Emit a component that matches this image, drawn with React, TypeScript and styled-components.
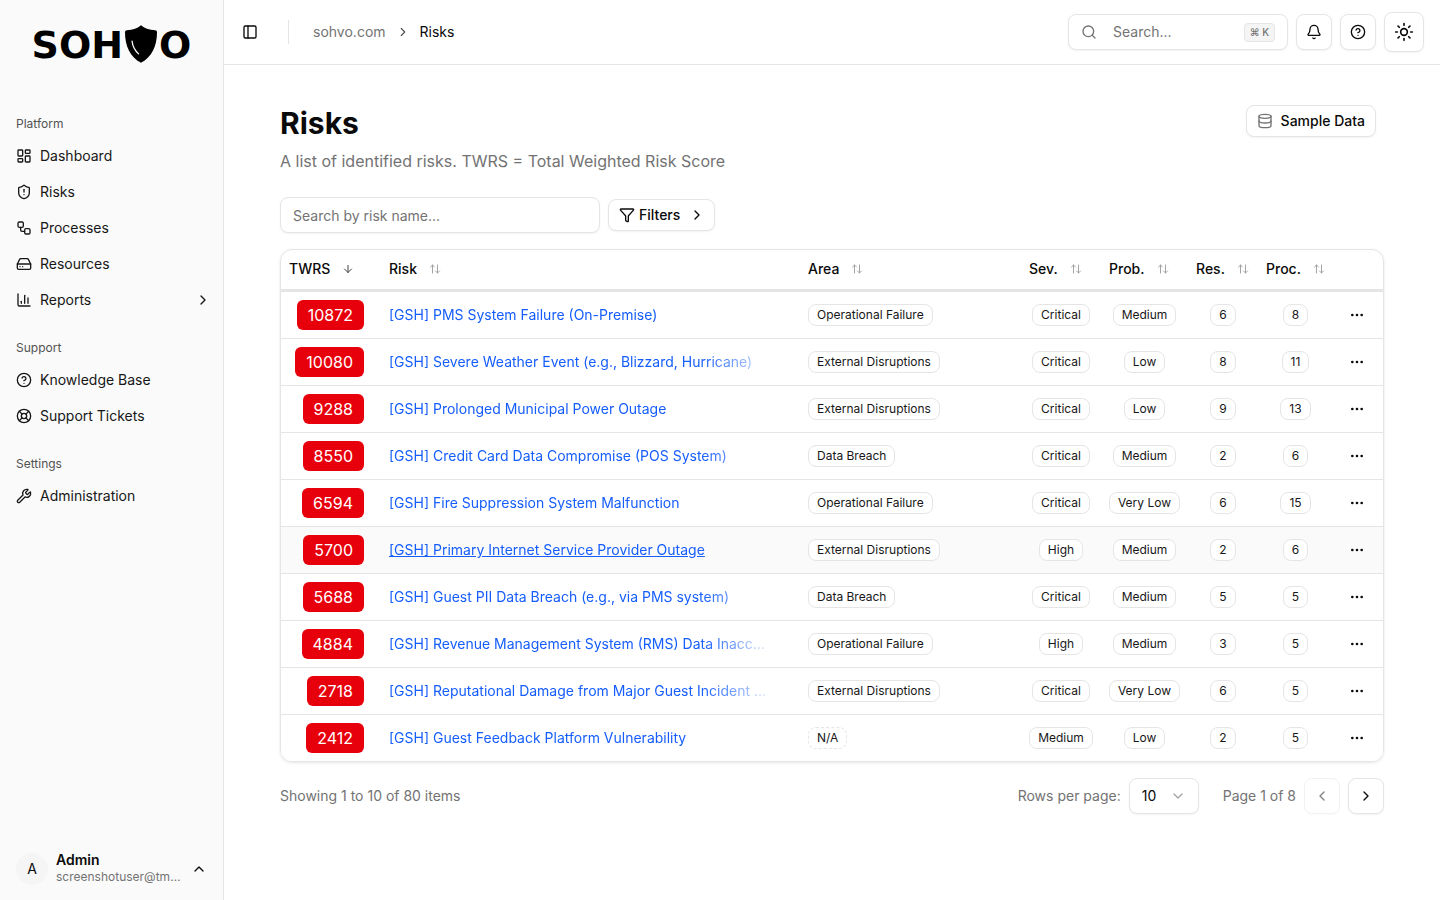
import React from "react";
import styled, { createGlobalStyle } from "styled-components";
import {
  ArrowDown,
  ArrowUpDown,
  Bell,
  ChartColumn,
  ChevronDown,
  ChevronLeft,
  ChevronRight,
  ChevronUp,
  CircleHelp,
  Database,
  Ellipsis,
  Funnel,
  HardDrive,
  LayoutDashboard,
  LifeBuoy,
  PanelLeft,
  Search,
  ShieldAlert,
  Sun,
  Workflow,
  Wrench,
} from "lucide-react";

const GlobalStyle = createGlobalStyle`
  * { box-sizing: border-box; }
  html, body { margin: 0; padding: 0; height: 100%; }
  body {
    font-family: Inter, "Liberation Sans", sans-serif;
    color: #0a0a0a;
    background: #fff;
    font-size: 14px;
    line-height: 20px;
  }
`;

const rows = [
  { twrs: 10872, risk: "[GSH] PMS System Failure (On-Premise)", area: "Operational Failure", sev: "Critical", prob: "Medium", res: 6, proc: 8 },
  { twrs: 10080, risk: "[GSH] Severe Weather Event (e.g., Blizzard, Hurricane)", area: "External Disruptions", sev: "Critical", prob: "Low", res: 8, proc: 11 },
  { twrs: 9288, risk: "[GSH] Prolonged Municipal Power Outage", area: "External Disruptions", sev: "Critical", prob: "Low", res: 9, proc: 13 },
  { twrs: 8550, risk: "[GSH] Credit Card Data Compromise (POS System)", area: "Data Breach", sev: "Critical", prob: "Medium", res: 2, proc: 6 },
  { twrs: 6594, risk: "[GSH] Fire Suppression System Malfunction", area: "Operational Failure", sev: "Critical", prob: "Very Low", res: 6, proc: 15 },
  { twrs: 5700, risk: "[GSH] Primary Internet Service Provider Outage", area: "External Disruptions", sev: "High", prob: "Medium", res: 2, proc: 6, hovered: true },
  { twrs: 5688, risk: "[GSH] Guest PII Data Breach (e.g., via PMS system)", area: "Data Breach", sev: "Critical", prob: "Medium", res: 5, proc: 5 },
  { twrs: 4884, risk: "[GSH] Revenue Management System (RMS) Data Inaccuracy", area: "Operational Failure", sev: "High", prob: "Medium", res: 3, proc: 5 },
  { twrs: 2718, risk: "[GSH] Reputational Damage from Major Guest Incident on Social", area: "External Disruptions", sev: "Critical", prob: "Very Low", res: 6, proc: 5 },
  { twrs: 2412, risk: "[GSH] Guest Feedback Platform Vulnerability", area: "N/A", sev: "Medium", prob: "Low", res: 2, proc: 5 },
];

const columns = [
  { label: "TWRS", width: 100, sorted: true },
  { label: "Risk", width: 419 },
  { label: "Area", width: 221 },
  { label: "Sev.", width: 80 },
  { label: "Prob.", width: 87 },
  { label: "Res.", width: 70 },
  { label: "Proc.", width: 75 },
];

const navGroups = [
  {
    title: "Platform",
    items: [
      { label: "Dashboard", icon: LayoutDashboard },
      { label: "Risks", icon: ShieldAlert },
      { label: "Processes", icon: Workflow },
      { label: "Resources", icon: HardDrive },
      { label: "Reports", icon: ChartColumn, more: true },
    ],
  },
  {
    title: "Support",
    items: [
      { label: "Knowledge Base", icon: CircleHelp },
      { label: "Support Tickets", icon: LifeBuoy },
    ],
  },
  {
    title: "Settings",
    items: [{ label: "Administration", icon: Wrench }],
  },
];

const ShieldMark = () => (
  <ShieldSvg viewBox="0 0 34 40" aria-hidden="true">
    <path
      fill="#000"
      d="M17 0c3.4 3 8.6 5 15 5.4 1.2 0 2 .9 2 2C34 22 28.500 33.500 17 40 5.500 33.500 0 22 0 7.400c0-1.100.8-2 2-2C8.400 5 13.600 3 17 0z"
    />
    <path fill="none" stroke="#fff" strokeWidth="1.300" strokeLinecap="round" d="M7.500 17c.6 5.500 3 10 7 13.500" />
  </ShieldSvg>
);

export default function App() {
  return (
    <>
      <GlobalStyle />
      <Shell>
        <Sidebar>
          <Logo>
            SOH
            <ShieldMark />O
          </Logo>
          <NavArea>
            {navGroups.map((group) => (
              <NavGroup key={group.title}>
                <GroupLabel>{group.title}</GroupLabel>
                {group.items.map((item) => (
                  <NavItem key={item.label}>
                    <item.icon size={16} strokeWidth={2} />
                    <span>{item.label}</span>
                    {"more" in item && (
                      <NavChevron>
                        <ChevronRight size={16} />
                      </NavChevron>
                    )}
                  </NavItem>
                ))}
              </NavGroup>
            ))}
          </NavArea>
          <UserRow>
            <Avatar>A</Avatar>
            <UserText>
              <UserName>Admin</UserName>
              <UserMail>screenshotuser@tmail.com</UserMail>
            </UserText>
            <ChevronUp size={16} />
          </UserRow>
        </Sidebar>

        <Main>
          <TopBar>
            <PanelButton>
              <PanelLeft size={16} />
            </PanelButton>
            <TopDivider />
            <Crumbs>
              <CrumbLink>sohvo.com</CrumbLink>
              <ChevronRight size={14} color="#525252" />
              <CrumbHere>Risks</CrumbHere>
            </Crumbs>
            <TopActions>
              <GlobalSearch>
                <Search size={16} color="#737373" />
                <GlobalPlaceholder>Search...</GlobalPlaceholder>
                <Kbd>⌘ K</Kbd>
              </GlobalSearch>
              <IconButton>
                <Bell size={16} />
              </IconButton>
              <IconButton>
                <CircleHelp size={16} />
              </IconButton>
              <ThemeButton>
                <Sun size={20} />
              </ThemeButton>
            </TopActions>
          </TopBar>

          <Content>
            <TitleRow>
              <div>
                <Title>Risks</Title>
                <Subtitle>A list of identified risks. TWRS = Total Weighted Risk Score</Subtitle>
              </div>
              <SampleButton>
                <Database size={16} color="#737373" />
                Sample Data
              </SampleButton>
            </TitleRow>

            <FilterRow>
              <RiskSearch placeholder="Search by risk name..." />
              <FilterButton>
                <Funnel size={16} />
                Filters
                <FilterChevron>
                  <ChevronRight size={16} />
                </FilterChevron>
              </FilterButton>
            </FilterRow>

            <TableCard>
              <Table>
                <colgroup>
                  {columns.map((c) => (
                    <Col key={c.label} $width={c.width} />
                  ))}
                  <Col $width={50} />
                </colgroup>
                <thead>
                  <tr>
                    {columns.map((c) => (
                      <HeadCell key={c.label}>
                        <HeadInner>
                          {c.label}
                          {c.sorted ? (
                            <SortIcon>
                              <ArrowDown size={12} color="#404040" />
                            </SortIcon>
                          ) : (
                            <SortIcon>
                              <ArrowUpDown size={12} color="#a3a3a3" />
                            </SortIcon>
                          )}
                        </HeadInner>
                      </HeadCell>
                    ))}
                    <HeadCell />
                  </tr>
                </thead>
                <tbody>
                  {rows.map((r) => (
                    <Row key={r.twrs} $hovered={r.hovered}>
                      <ScoreCell>
                        <Score>{r.twrs}</Score>
                      </ScoreCell>
                      <Cell>
                        <RiskLink $hovered={r.hovered}>{r.risk}</RiskLink>
                      </Cell>
                      <Cell>
                        <Chip $dashed={r.area === "N/A"}>{r.area}</Chip>
                      </Cell>
                      <CenterCell>
                        <Chip>{r.sev}</Chip>
                      </CenterCell>
                      <CenterCell>
                        <Chip>{r.prob}</Chip>
                      </CenterCell>
                      <CenterCell>
                        <Chip>{r.res}</Chip>
                      </CenterCell>
                      <CenterCell>
                        <Chip>{r.proc}</Chip>
                      </CenterCell>
                      <CenterCell>
                        <RowMenu>
                          <Ellipsis size={16} />
                        </RowMenu>
                      </CenterCell>
                    </Row>
                  ))}
                </tbody>
              </Table>
            </TableCard>

            <Pager>
              <PagerText>Showing 1 to 10 of 80 items</PagerText>
              <PagerControls>
                <PagerText>Rows per page:</PagerText>
                <RowsSelect>
                  10
                  <ChevronDown size={16} color="#a3a3a3" />
                </RowsSelect>
                <PageCount>Page 1 of 8</PageCount>
                <PageButton $disabled>
                  <ChevronLeft size={16} />
                </PageButton>
                <PageButton>
                  <ChevronRight size={16} />
                </PageButton>
              </PagerControls>
            </Pager>
          </Content>
        </Main>
      </Shell>
    </>
  );
}

const Shell = styled.div`
  display: flex;
  height: 100vh;
  overflow: hidden;
`;

const Sidebar = styled.aside`
  display: flex;
  flex-direction: column;
  flex: 0 0 224px;
  min-width: 0;
  background: #fafafa;
  border-right: 1px solid #e5e5e5;
`;

const Logo = styled.div`
  display: flex;
  align-items: center;
  justify-content: center;
  height: 90px;
  font-family: "DejaVu Sans", sans-serif;
  font-size: 38px;
  line-height: 44px;
  font-weight: 700;
  color: #000;
`;

const ShieldSvg = styled.svg`
  width: 32px;
  height: 38px;
  margin: -3px 2px 0 2px;
`;

const NavArea = styled.nav`
  display: flex;
  flex-direction: column;
  gap: 8px;
  padding: 8px 8px 0;
  margin-top: 12px;
`;

const NavGroup = styled.div`
  display: flex;
  flex-direction: column;
  padding-bottom: 8px;
`;

const GroupLabel = styled.div`
  display: flex;
  align-items: center;
  height: 28px;
  padding-left: 8px;
  font-size: 12px;
  line-height: 16px;
  font-weight: 400;
  color: #525252;
`;

const NavItem = styled.a`
  display: flex;
  align-items: center;
  gap: 8px;
  height: 36px;
  padding: 0 4px 0 8px;
  color: #171717;
  font-size: 14px;
  svg {
    flex: none;
  }
`;

const NavChevron = styled.span`
  display: flex;
  margin-left: auto;
`;

const UserRow = styled.div`
  display: flex;
  align-items: center;
  gap: 8px;
  margin-top: auto;
  padding: 0 16px 15px;
  svg {
    flex: none;
  }
`;

const Avatar = styled.div`
  display: flex;
  align-items: center;
  justify-content: center;
  flex: none;
  width: 32px;
  height: 32px;
  border-radius: 50%;
  background: #f5f5f5;
  font-size: 14px;
`;

const UserText = styled.div`
  flex: 1;
  min-width: 0;
`;

const UserName = styled.div`
  font-size: 14px;
  line-height: 14px;
  font-weight: 600;
`;

const UserMail = styled.div`
  margin-top: 2px;
  overflow: hidden;
  font-size: 12px;
  line-height: 16px;
  color: #737373;
  white-space: nowrap;
  text-overflow: ellipsis;
`;

const Main = styled.main`
  display: flex;
  flex: 1;
  flex-direction: column;
  min-width: 0;
`;

const TopBar = styled.header`
  display: flex;
  align-items: center;
  flex: 0 0 65px;
  padding: 0 16px;
  border-bottom: 1px solid #e5e5e5;
`;

const PanelButton = styled.button`
  display: flex;
  align-items: center;
  justify-content: center;
  width: 20px;
  height: 28px;
  padding: 0;
  border: 0;
  background: none;
  color: #0a0a0a;
`;

const TopDivider = styled.div`
  width: 1px;
  height: 24px;
  margin: 0 24px 0 28px;
  background: #e5e5e5;
`;

const Crumbs = styled.div`
  display: flex;
  align-items: center;
  gap: 10px;
  font-size: 14px;
`;

const CrumbLink = styled.span`
  color: #737373;
`;

const CrumbHere = styled.span`
  color: #0a0a0a;
`;

const TopActions = styled.div`
  display: flex;
  align-items: center;
  gap: 8px;
  margin-left: auto;
`;

const GlobalSearch = styled.div`
  display: flex;
  align-items: center;
  width: 220px;
  height: 36px;
  padding: 0 12px;
  border: 1px solid #e5e5e5;
  border-radius: 8px;
  background: #fff;
  box-shadow: 0 1px 2px rgba(0, 0, 0, 0.05);
`;

const GlobalPlaceholder = styled.span`
  margin-left: 16px;
  color: #737373;
  font-size: 14px;
`;

const Kbd = styled.kbd`
  display: flex;
  align-items: center;
  justify-content: center;
  width: 31px;
  height: 19px;
  margin-left: auto;
  border: 1px solid #e5e5e5;
  border-radius: 4px;
  background: #f5f5f5;
  color: #737373;
  font-family: Inter, sans-serif;
  font-size: 10px;
  font-weight: 500;
`;

const IconButton = styled.button`
  display: flex;
  align-items: center;
  justify-content: center;
  width: 36px;
  height: 36px;
  padding: 0;
  border: 1px solid #e5e5e5;
  border-radius: 8px;
  background: #fff;
  color: #0a0a0a;
  box-shadow: 0 1px 2px rgba(0, 0, 0, 0.05);
`;

const ThemeButton = styled(IconButton)`
  width: 40px;
  height: 40px;
`;

const Content = styled.div`
  padding: 40px 56px 0;
`;

const TitleRow = styled.div`
  display: flex;
  align-items: flex-start;
  justify-content: space-between;
  padding-right: 8px;
`;

const Title = styled.h1`
  margin: 0;
  font-size: 30px;
  line-height: 36px;
  font-weight: 700;
`;

const Subtitle = styled.p`
  margin: 8px 0 0;
  font-size: 16px;
  line-height: 24px;
  color: #737373;
`;

const SampleButton = styled.button`
  display: flex;
  align-items: center;
  gap: 8px;
  height: 32px;
  padding: 0 10px;
  border: 1px solid #e5e5e5;
  border-radius: 8px;
  background: #fff;
  color: #0a0a0a;
  font-family: inherit;
  font-size: 14px;
  line-height: 20px;
  font-weight: 500;
  box-shadow: 0 1px 2px rgba(0, 0, 0, 0.05);
`;

const FilterRow = styled.div`
  display: flex;
  align-items: center;
  gap: 8px;
  margin-top: 24px;
`;

const RiskSearch = styled.input`
  width: 320px;
  height: 36px;
  padding: 0 12px;
  border: 1px solid #e5e5e5;
  border-radius: 8px;
  background: #fff;
  font-family: inherit;
  font-size: 14px;
  box-shadow: 0 1px 2px rgba(0, 0, 0, 0.05);
  &::placeholder {
    color: #737373;
  }
`;

const FilterButton = styled.button`
  display: flex;
  align-items: center;
  gap: 4px;
  height: 32px;
  padding: 0 9px 0 10px;
  border: 1px solid #e5e5e5;
  border-radius: 8px;
  background: #fff;
  color: #0a0a0a;
  font-family: inherit;
  font-size: 14px;
  line-height: 20px;
  font-weight: 500;
  box-shadow: 0 1px 2px rgba(0, 0, 0, 0.05);
`;

const FilterChevron = styled.span`
  display: flex;
  margin-left: 5px;
`;

const TableCard = styled.div`
  margin-top: 16px;
  overflow: hidden;
  border: 1px solid #e5e5e5;
  border-radius: 12px;
  box-shadow: 0 1px 3px rgba(0, 0, 0, 0.1);
`;

const Table = styled.table`
  width: 100%;
  table-layout: fixed;
  border-collapse: separate;
  border-spacing: 0;
`;

const Col = styled.col<{ $width: number }>`
  width: ${(p) => p.$width}px;
`;

const HeadCell = styled.th`
  height: 42px;
  padding: 0 8px 1px;
  border-bottom: 3px solid #e5e5e5;
  font-size: 14px;
  font-weight: 500;
  text-align: left;
`;

const HeadInner = styled.span`
  display: flex;
  align-items: center;
  gap: 12px;
`;

const SortIcon = styled.span`
  display: flex;
`;

const Row = styled.tr<{ $hovered?: boolean }>`
  background: ${(p) => (p.$hovered ? "#fafafa" : "#fff")};
  &:last-child td {
    height: 46px;
    border-bottom: 0;
  }
`;

const Cell = styled.td`
  height: 47px;
  padding: 0 8px;
  border-bottom: 1px solid #e5e5e5;
  font-size: 14px;
  vertical-align: middle;
`;

const ScoreCell = styled(Cell)`
  padding-right: 17px;
  text-align: right;
`;

const CenterCell = styled(Cell)`
  padding: 0;
  text-align: center;
`;

const Score = styled.span`
  display: inline-flex;
  align-items: center;
  height: 30px;
  padding: 0 11px;
  border-radius: 6px;
  background: #e7000b;
  color: #fff;
  font-size: 16px;
  vertical-align: middle;
`;

const RiskLink = styled.a<{ $hovered?: boolean }>`
  display: block;
  width: 380px;
  overflow: hidden;
  color: #155dfc;
  font-size: 14px;
  white-space: nowrap;
  text-overflow: ellipsis;
  text-decoration: ${(p) => (p.$hovered ? "underline" : "none")};
  mask-image: linear-gradient(to right, #000 82%, rgba(0, 0, 0, 0.15) 100%);
`;

const Chip = styled.span<{ $dashed?: boolean }>`
  display: inline-flex;
  align-items: center;
  height: 22px;
  padding: 0 8px;
  border: 1px ${(p) => (p.$dashed ? "dashed" : "solid")} #e5e5e5;
  border-radius: 8px;
  background: #fff;
  color: #171717;
  font-size: 12px;
  line-height: 16px;
  font-weight: 400;
  vertical-align: middle;
`;

const RowMenu = styled.span`
  display: flex;
  justify-content: center;
  margin-right: 2px;
`;

const Pager = styled.div`
  display: flex;
  align-items: center;
  justify-content: space-between;
  margin-top: 16px;
`;

const PagerControls = styled.div`
  display: flex;
  align-items: center;
  gap: 8px;
`;

const PagerText = styled.span`
  color: #737373;
  font-size: 14px;
`;

const PageCount = styled(PagerText)`
  margin-left: 16px;
`;

const RowsSelect = styled.div`
  display: flex;
  align-items: center;
  justify-content: space-between;
  width: 70px;
  height: 36px;
  padding: 0 12px;
  border: 1px solid #e5e5e5;
  border-radius: 8px;
  background: #fff;
  font-size: 14px;
  box-shadow: 0 1px 2px rgba(0, 0, 0, 0.05);
`;

const PageButton = styled.button<{ $disabled?: boolean }>`
  display: flex;
  align-items: center;
  justify-content: center;
  width: 36px;
  height: 36px;
  padding: 0;
  border: 1px solid #e5e5e5;
  border-radius: 8px;
  background: #fff;
  color: #0a0a0a;
  box-shadow: 0 1px 2px rgba(0, 0, 0, 0.05);
  opacity: ${(p) => (p.$disabled ? 0.5 : 1)};
`;
